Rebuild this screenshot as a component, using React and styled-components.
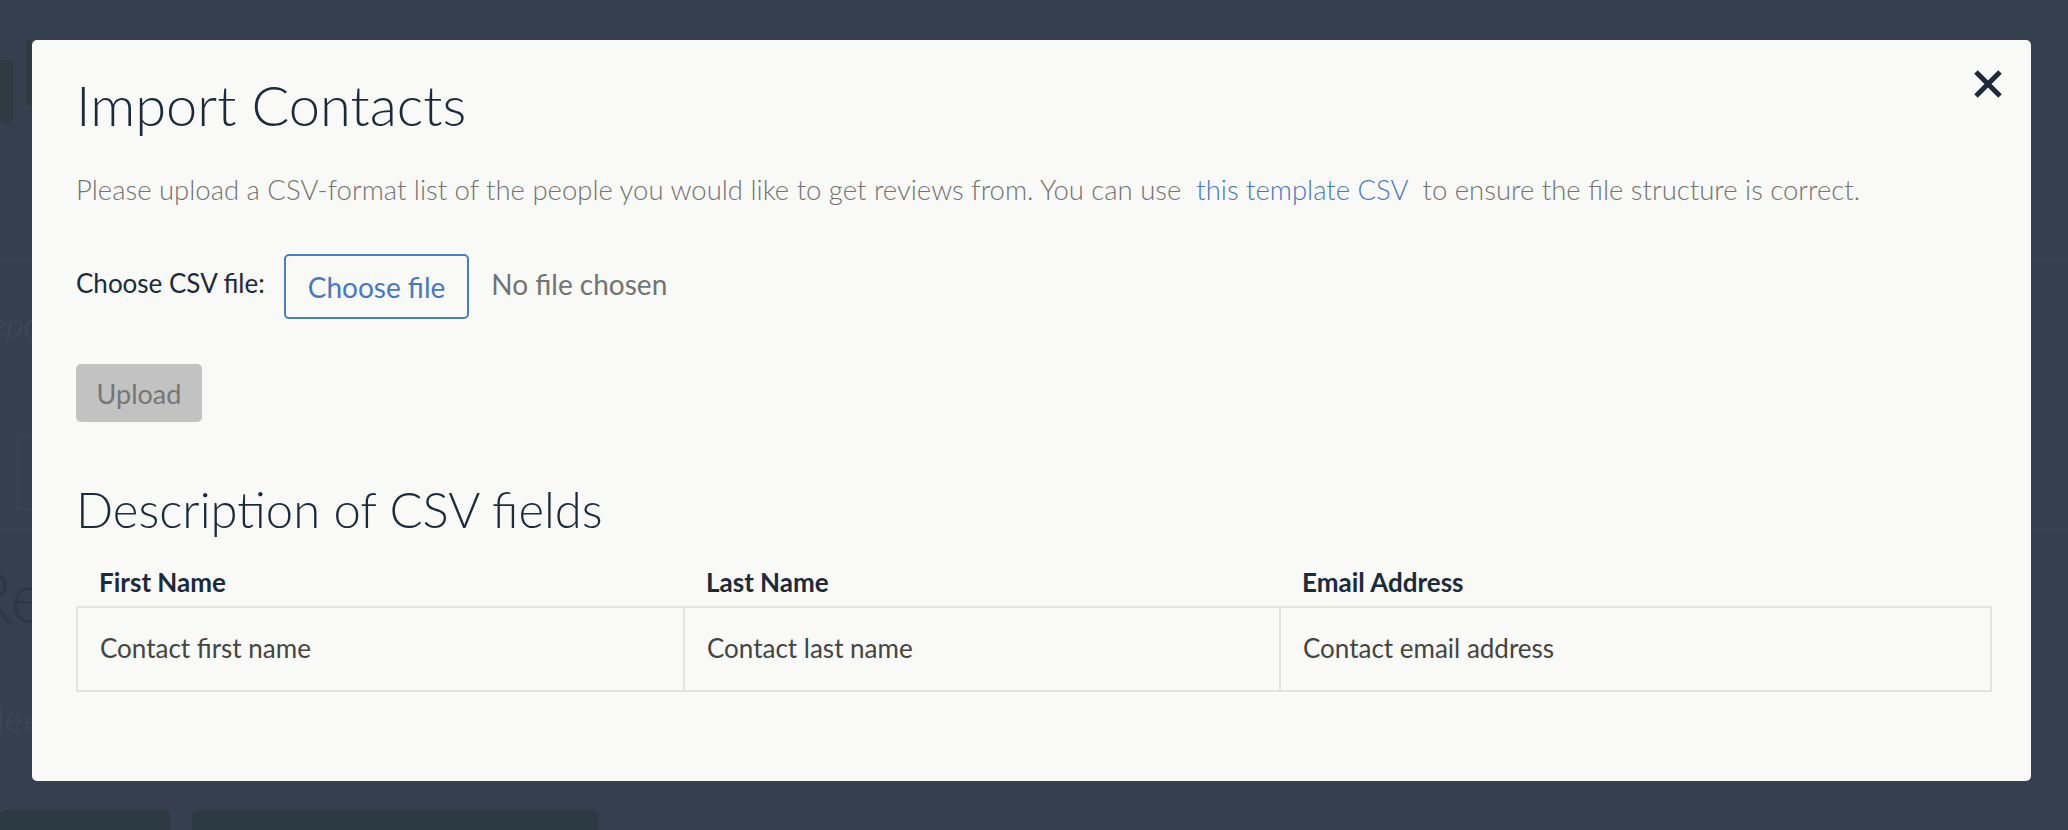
import styled, { createGlobalStyle } from 'styled-components';

const GlobalStyle = createGlobalStyle`
  html, body {
    margin: 0;
    padding: 0;
    background: #353f4d;
    font-family: 'Lato', 'Noto Sans', sans-serif;
    overflow: hidden;
  }
`;

// faint page behind the backdrop
const Page = styled.div`
  width: 2068px;
  height: 830px;
  display: flex;
  flex-direction: column;
  color: #3f4a58;
`;

const PageHeader = styled.header`
  height: 261px;
  border-bottom: 1px solid #3c4754;
  display: flex;
  align-items: flex-start;
  gap: 13px;
  padding-top: 40px;
  box-sizing: border-box;
`;

const LogoBlock = styled.div`
  width: ${(p) => p.w}px;
  height: ${(p) => p.h}px;
  margin-top: ${(p) => p.top || 0}px;
  background: #2f3b43;
  border-radius: 0 0 ${(p) => p.r || 0}px ${(p) => p.r || 0}px;
`;

// only the strip left of the modal shows, so clip it
const Strip = styled.div`
  width: 32px;
  overflow: hidden;
  white-space: nowrap;
`;

const PageSection = styled.section`
  height: 270px;
  border-bottom: 1px solid #3c4754;
  padding: 42px 0 0 0;
  box-sizing: border-box;
  display: flex;
  flex-direction: column;
  gap: 92px;
`;

const FaintItalic = styled.div`
  font-style: italic;
  font-weight: 300;
  font-size: 34px;
  margin-left: -28px;
`;

const FaintCard = styled.div`
  margin-left: 17px;
  width: 300px;
  height: 72px;
  border: 1px solid #3c4754;
  border-radius: 6px 0 0 0;
`;

const PageBody = styled.div`
  flex: 1;
  display: flex;
  flex-direction: column;
  padding-top: 36px;
  gap: 70px;
`;

const FaintHeading = styled.div`
  font-size: 70px;
  font-weight: 300;
  line-height: 60px;
  margin-left: -30px;
  color: #2d3845;
`;

const FaintText = styled.div`
  font-size: 36px;
  font-weight: 300;
  margin-left: -22px;
  color: #3d4855;
`;

const FaintActions = styled.div`
  margin-top: auto;
  display: flex;
  gap: 22px;
`;

const FaintButton = styled.div`
  width: ${(p) => p.w}px;
  height: 20px;
  background: #2b3a40;
  border-radius: 6px 6px 0 0;
`;

// modal
const Modal = styled.div`
  position: fixed;
  top: 40px;
  left: 32px;
  width: 1999px;
  box-sizing: border-box;
  padding: 31px 41px 89px 44px;
  background: #f9f9f7;
  border-radius: 5px;
  color: #1c2a3a;
`;

const CloseButton = styled.button`
  position: absolute;
  top: 28px;
  right: 27px;
  width: 32px;
  height: 32px;
  padding: 0;
  border: none;
  background: transparent;
  display: flex;
  align-items: center;
  justify-content: center;
  cursor: pointer;
`;

const Title = styled.h2`
  margin: 0;
  font-size: 56px;
  line-height: 68px;
  font-weight: 300;
  color: #1c2a3a;
`;

const Intro = styled.p`
  margin: 34px 0 0;
  font-size: 27.5px;
  line-height: 34px;
  font-weight: 300;
  color: #737373;
  white-space: pre;
`;

const TemplateLink = styled.a`
  color: #4a78bd;
  text-decoration: none;
`;

const FileRow = styled.div`
  margin-top: 47px;
  display: flex;
  align-items: center;
`;

const FieldLabel = styled.label`
  font-size: 26px;
  line-height: 30px;
  padding-bottom: 7px;
  margin-right: 19px;
  color: #1c2a3a;
`;

const ChooseButton = styled.button`
  height: 65px;
  box-sizing: border-box;
  padding: 0 22px;
  border: 2px solid #4f7bbf;
  border-radius: 5px;
  background: transparent;
  color: #4a78bd;
  font-family: inherit;
  font-size: 28px;
  display: inline-flex;
  align-items: center;
  margin-right: 22px;
`;

const NoFile = styled.span`
  font-size: 28px;
  line-height: 30px;
  padding-bottom: 6px;
  color: #737373;
`;

const UploadButton = styled.button`
  margin-top: 45px;
  width: 126px;
  height: 58px;
  border: none;
  border-radius: 5px;
  background: #c2c2c2;
  color: #767676;
  font-family: inherit;
  font-size: 27px;
  display: flex;
  align-items: center;
  justify-content: center;
`;

const SubTitle = styled.h3`
  margin: 57px 0 0;
  font-size: 49px;
  line-height: 60px;
  font-weight: 300;
  color: #1c2a3a;
`;

const FieldsTable = styled.table`
  margin-top: 28px;
  width: 1914px;
  border-collapse: collapse;
  table-layout: fixed;
`;

const HeadCell = styled.th`
  text-align: left;
  padding: 0 22px 9px;
  font-size: 26px;
  line-height: 30px;
  font-weight: 700;
  color: #1c2a3a;
`;

const BodyCell = styled.td`
  padding: 25px 22px 27px;
  border: 2px solid #e3e3e1;
  font-size: 26px;
  line-height: 30px;
  color: #444;
`;

const fields = [
  { name: 'First Name', desc: 'Contact first name', width: 607 },
  { name: 'Last Name', desc: 'Contact last name', width: 596 },
  { name: 'Email Address', desc: 'Contact email address', width: 711 },
];

const CloseIcon = () => (
  <svg width="30" height="30" viewBox="0 0 30 30">
    <path d="M3 3 L27 27 M27 3 L3 27" stroke="#1c2a3a" strokeWidth="5" strokeLinecap="butt" />
  </svg>
);

const App = () => {
  return (
    <>
      <GlobalStyle />
      <Page>
        <PageHeader>
          <LogoBlock w={13} h={63} top={20} r={10} />
          <LogoBlock w={6} h={65} />
        </PageHeader>
        <PageSection>
          <Strip>
            <FaintItalic>Repo</FaintItalic>
          </Strip>
          <FaintCard />
        </PageSection>
        <PageBody>
          <Strip>
            <FaintHeading>Rev</FaintHeading>
          </Strip>
          <Strip>
            <FaintText>Need</FaintText>
          </Strip>
          <FaintActions>
            <FaintButton w={170} />
            <FaintButton w={406} />
          </FaintActions>
        </PageBody>
      </Page>

      <Modal>
        <CloseButton aria-label="Close">
          <CloseIcon />
        </CloseButton>
        <Title>Import Contacts</Title>
        <Intro>
          Please upload a CSV-format list of the people you would like to get reviews from. You can use{'  '}
          <TemplateLink href="#">this template CSV</TemplateLink>
          {'  '}to ensure the file structure is correct.
        </Intro>
        <FileRow>
          <FieldLabel>Choose CSV file:</FieldLabel>
          <ChooseButton>Choose file</ChooseButton>
          <NoFile>No file chosen</NoFile>
        </FileRow>
        <UploadButton disabled>Upload</UploadButton>
        <SubTitle>Description of CSV fields</SubTitle>
        <FieldsTable>
          <colgroup>
            {fields.map((f) => (
              <col key={f.name} style={{ width: f.width }} />
            ))}
          </colgroup>
          <thead>
            <tr>
              {fields.map((f) => (
                <HeadCell key={f.name}>{f.name}</HeadCell>
              ))}
            </tr>
          </thead>
          <tbody>
            <tr>
              {fields.map((f) => (
                <BodyCell key={f.name}>{f.desc}</BodyCell>
              ))}
            </tr>
          </tbody>
        </FieldsTable>
      </Modal>
    </>
  );
};

export default App;
